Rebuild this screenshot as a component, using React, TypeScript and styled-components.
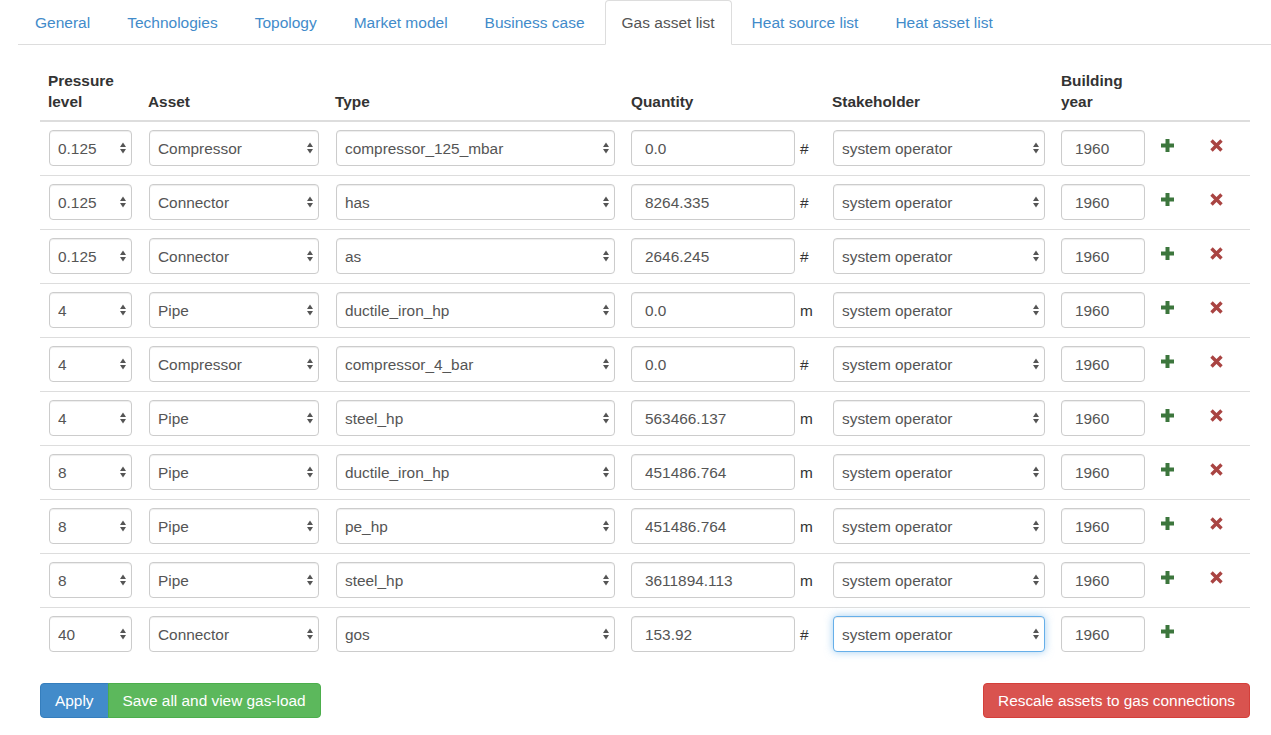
import React from "react";
import styled, { createGlobalStyle, css } from "styled-components";

const GlobalStyle = createGlobalStyle`
  html, body { margin: 0; padding: 0; background: #fff; }
  body {
    font-family: "Liberation Sans", Arial, Helvetica, sans-serif;
    font-size: 15.4px;
    line-height: 21px;
    color: #333;
  }
  * { box-sizing: border-box; }
`;

const Page = styled.div`
  padding-left: 18px;
  width: 1271px;
`;

const Nav = styled.ul`
  display: flex;
  list-style: none;
  margin: 0;
  padding: 0;
  height: 45px;
  border-bottom: 1px solid #ddd;
`;

const Tab = styled.li<{ $active?: boolean }>`
  margin-right: 3px;
  margin-bottom: -1px;
  height: 45px;
  padding: 0 16px;
  display: flex;
  align-items: center;
  border: 1px solid transparent;
  border-radius: 4px 4px 0 0;
  color: #428bca;
  font-size: 15.5px;
  white-space: nowrap;
  ${(p) =>
    p.$active &&
    css`
      color: #555;
      background: #fff;
      border-color: #ddd;
      border-bottom-color: transparent;
    `}
`;

const Content = styled.div`
  padding: 17px 21px 0 22px;
`;

const Table = styled.table`
  width: 1210px;
  table-layout: fixed;
  border-collapse: collapse;
  border-spacing: 0;
`;

const Th = styled.th`
  text-align: left;
  vertical-align: bottom;
  font-weight: bold;
  color: #333;
  padding: 8px;
  line-height: 21px;
  border-bottom: 2px solid #ddd;
`;

const Tr = styled.tr`
  & + & > td { border-top: 1px solid #ddd; }
`;

const Td = styled.td`
  padding: 8px 8px 9px;
  vertical-align: top;
`;

const controlBase = css`
  display: block;
  width: 100%;
  height: 36px;
  font-family: "Liberation Sans", Arial, Helvetica, sans-serif;
  font-size: 15.4px;
  line-height: 34px;
  color: #555;
  background: #fff;
  border: 1px solid #ccc;
  border-radius: 4px;
  box-shadow: inset 0 1px 1px rgba(0, 0, 0, 0.075);
  outline: none;
`;

const SelectWrap = styled.div`
  position: relative;
  padding-left: 1px;
`;

const Select = styled.select<{ $focus?: boolean }>`
  ${controlBase};
  appearance: none;
  -webkit-appearance: none;
  padding: 1px 20px 0 8px;
  ${(p) =>
    p.$focus &&
    css`
      border-color: #66afe9;
      box-shadow: inset 0 1px 1px rgba(0, 0, 0, 0.075),
        0 0 8px rgba(102, 175, 233, 0.6);
    `}
`;

const Arrow = styled.svg`
  position: absolute;
  right: 6px;
  top: 12px;
  pointer-events: none;
`;

const Input = styled.input`
  ${controlBase};
  padding: 1px 13px 0;
`;

const QtyCell = styled.div`
  display: flex;
  align-items: center;
`;

const Unit = styled.span`
  flex: 0 0 21px;
  padding-left: 5px;
  color: #333;
`;

const IconBtn = styled.span`
  display: inline-flex;
  padding-top: 9px;
`;

const Footer = styled.div`
  display: flex;
  justify-content: space-between;
  margin-top: 22px;
`;

const BtnGroup = styled.div`
  display: flex;
`;

const Button = styled.button<{ $variant: "primary" | "success" | "danger"; $group?: "left" | "right" }>`
  height: 35px;
  padding: 0 14px;
  border: 1px solid transparent;
  border-radius: 4px;
  font-family: "Liberation Sans", Arial, Helvetica, sans-serif;
  font-size: 15.4px;
  color: #fff;
  cursor: pointer;
  white-space: nowrap;
  ${(p) =>
    p.$variant === "primary"
      ? css`background: #428bca; border-color: #357ebd;`
      : p.$variant === "success"
      ? css`background: #5cb85c; border-color: #4cae4c;`
      : css`background: #d9534f; border-color: #d43f3a;`}
  ${(p) => p.$group === "left" && css`border-top-right-radius: 0; border-bottom-right-radius: 0;`}
  ${(p) => p.$group === "right" && css`border-top-left-radius: 0; border-bottom-left-radius: 0; margin-left: -1px;`}
`;

const SelectField = ({ value, focus }: { value: string; focus?: boolean }) => (
  <SelectWrap>
    <Select defaultValue={value} $focus={focus}>
      <option value={value}>{value}</option>
    </Select>
    <Arrow width="6" height="12" viewBox="0 0 6 12">
      <polygon points="0,5 3,0.5 6,5" fill="#555" />
      <polygon points="0,7 3,11.5 6,7" fill="#555" />
    </Arrow>
  </SelectWrap>
);

const PlusIcon = () => (
  <svg width="13" height="13" viewBox="0 0 13 13">
    <rect x="4.5" y="0" width="4" height="13" fill="#3c763d" />
    <rect x="0" y="4.5" width="13" height="4" fill="#3c763d" />
  </svg>
);

const RemoveIcon = () => (
  <svg width="13" height="13" viewBox="0 0 13 13">
    <path d="M1.5 1.5 L11.5 11.5 M11.5 1.5 L1.5 11.5" stroke="#a94442" strokeWidth="3.4" />
  </svg>
);

type Row = [string, string, string, string, string];

const rows: Row[] = [
  ["0.125", "Compressor", "compressor_125_mbar", "0.0", "#"],
  ["0.125", "Connector", "has", "8264.335", "#"],
  ["0.125", "Connector", "as", "2646.245", "#"],
  ["4", "Pipe", "ductile_iron_hp", "0.0", "m"],
  ["4", "Compressor", "compressor_4_bar", "0.0", "#"],
  ["4", "Pipe", "steel_hp", "563466.137", "m"],
  ["8", "Pipe", "ductile_iron_hp", "451486.764", "m"],
  ["8", "Pipe", "pe_hp", "451486.764", "m"],
  ["8", "Pipe", "steel_hp", "3611894.113", "m"],
  ["40", "Connector", "gos", "153.92", "#"],
];

const tabs = [
  "General",
  "Technologies",
  "Topology",
  "Market model",
  "Business case",
  "Gas asset list",
  "Heat source list",
  "Heat asset list",
];

export default function App() {
  return (
    <Page>
      <GlobalStyle />
      <Nav>
        {tabs.map((t) => (
          <Tab key={t} $active={t === "Gas asset list"}>
            {t}
          </Tab>
        ))}
      </Nav>
      <Content>
        <Table>
          <colgroup>
            <col style={{ width: 100 }} />
            <col style={{ width: 187 }} />
            <col style={{ width: 296 }} />
            <col style={{ width: 201 }} />
            <col style={{ width: 229 }} />
            <col style={{ width: 100 }} />
            <col style={{ width: 49 }} />
            <col style={{ width: 48 }} />
          </colgroup>
          <thead>
            <tr>
              <Th>Pressure level</Th>
              <Th>Asset</Th>
              <Th>Type</Th>
              <Th>Quantity</Th>
              <Th>Stakeholder</Th>
              <Th>Building year</Th>
              <Th />
              <Th />
            </tr>
          </thead>
          <tbody>
            {rows.map((r, i) => {
              const last = i === rows.length - 1;
              return (
                <Tr key={i}>
                  <Td><SelectField value={r[0]} /></Td>
                  <Td><SelectField value={r[1]} /></Td>
                  <Td><SelectField value={r[2]} /></Td>
                  <Td>
                    <QtyCell>
                      <Input defaultValue={r[3]} />
                      <Unit>{r[4]}</Unit>
                    </QtyCell>
                  </Td>
                  <Td><SelectField value="system operator" focus={last} /></Td>
                  <Td><Input defaultValue="1960" /></Td>
                  <Td><IconBtn><PlusIcon /></IconBtn></Td>
                  <Td>{!last && <IconBtn><RemoveIcon /></IconBtn>}</Td>
                </Tr>
              );
            })}
          </tbody>
        </Table>
        <Footer>
          <BtnGroup>
            <Button $variant="primary" $group="left">Apply</Button>
            <Button $variant="success" $group="right">Save all and view gas-load</Button>
          </BtnGroup>
          <Button $variant="danger">Rescale assets to gas connections</Button>
        </Footer>
      </Content>
    </Page>
  );
}
